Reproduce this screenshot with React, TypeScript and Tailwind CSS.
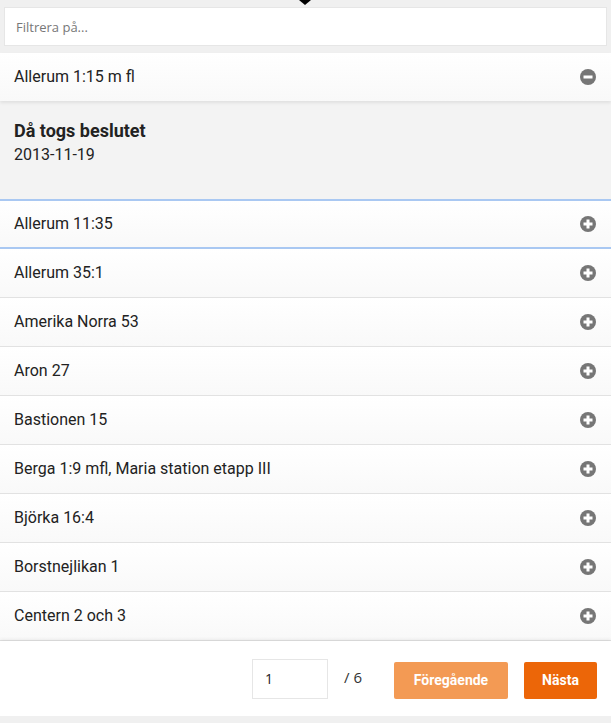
import React from "react";

const ITEMS = [
  "Allerum 35:1",
  "Amerika Norra 53",
  "Aron 27",
  "Bastionen 15",
  "Berga 1:9 mfl, Maria station etapp III",
  "Björka 16:4",
  "Borstnejlikan 1",
  "Centern 2 och 3",
];

function CircleIcon({ minus }: { minus?: boolean }) {
  return (
    <svg width="16" height="16" viewBox="0 0 16 16" className="shrink-0">
      <circle cx="8" cy="8" r="8" fill="#767676" />
      <rect x="3.5" y="6.5" width="9" height="3" fill="#fff" />
      {!minus && <rect x="6.5" y="3.5" width="3" height="9" fill="#fff" />}
    </svg>
  );
}

function Row({ label, minus, className = "" }: { label: string; minus?: boolean; className?: string }) {
  return (
    <div
      className={
        "flex items-center justify-between pl-[14px] pr-[15px] bg-gradient-to-b from-white to-[#f9f9f9] " +
        className
      }
    >
      <span className="text-[16px] text-[#222] leading-[20px]">{label}</span>
      <CircleIcon minus={minus} />
    </div>
  );
}

export default function App() {
  return (
    <div className="w-[611px] h-[723px] bg-[#f0f0f0] font-['Roboto',sans-serif] flex flex-col relative overflow-hidden">
      <div className="absolute left-[299px] top-0 w-0 h-0 border-l-[6px] border-r-[6px] border-t-[5px] border-l-transparent border-r-transparent border-t-black" />
      <div className="pt-[7px] px-[4px] pb-[7px]">
        <input
          placeholder="Filtrera på..."
          className="w-full h-[39px] bg-white border border-[#e6e6e6] px-[11px] text-[13px] font-['Open_Sans',sans-serif] placeholder:text-[#777] outline-none"
        />
      </div>

      <Row label="Allerum 1:15 m fl" minus className="h-[48px] shadow-[0_2px_3px_rgba(0,0,0,0.08)] relative z-10" />
      <div className="h-[98px] bg-[#f3f3f3] pl-[14px] pt-[18px]">
        <div className="text-[18px] font-bold text-[#222] leading-[24px]">Då togs beslutet</div>
        <div className="text-[16px] text-[#222] leading-[20px] mt-[2px]">2013-11-19</div>
      </div>
      <Row label="Allerum 11:35" className="h-[50px] border-y-2 border-[#a9c8f2] bg-white" />
      <div className="flex flex-col">
        {ITEMS.map((t, i) => (
          <Row key={i} label={t} className="h-[49px] border-b border-[#e2e2e2]" />
        ))}
      </div>

      <div className="h-[75px] bg-white flex items-center justify-end pr-[14px] shadow-[0_-2px_3px_rgba(0,0,0,0.06)] relative z-10">
        <input
          defaultValue="1"
          className="w-[76px] h-[40px] border border-[#e6e6e6] px-[12px] text-[14px] text-[#222] font-['Open_Sans',sans-serif] outline-none"
        />
        <span className="ml-[16px] mb-[2px] text-[15px] text-[#333] font-['Open_Sans',sans-serif]">/ 6</span>
        <button className="ml-[32px] w-[114px] h-[37px] rounded-[2px] bg-[#f39a54] text-white font-bold text-[14px] mt-[3px]">
          Föregående
        </button>
        <button className="ml-[16px] w-[73px] h-[37px] rounded-[2px] bg-[#ec6608] text-white font-bold text-[14px] mt-[3px]">
          Nästa
        </button>
      </div>
      <div className="flex-1 bg-[#f0f0f0]" />
    </div>
  );
}
